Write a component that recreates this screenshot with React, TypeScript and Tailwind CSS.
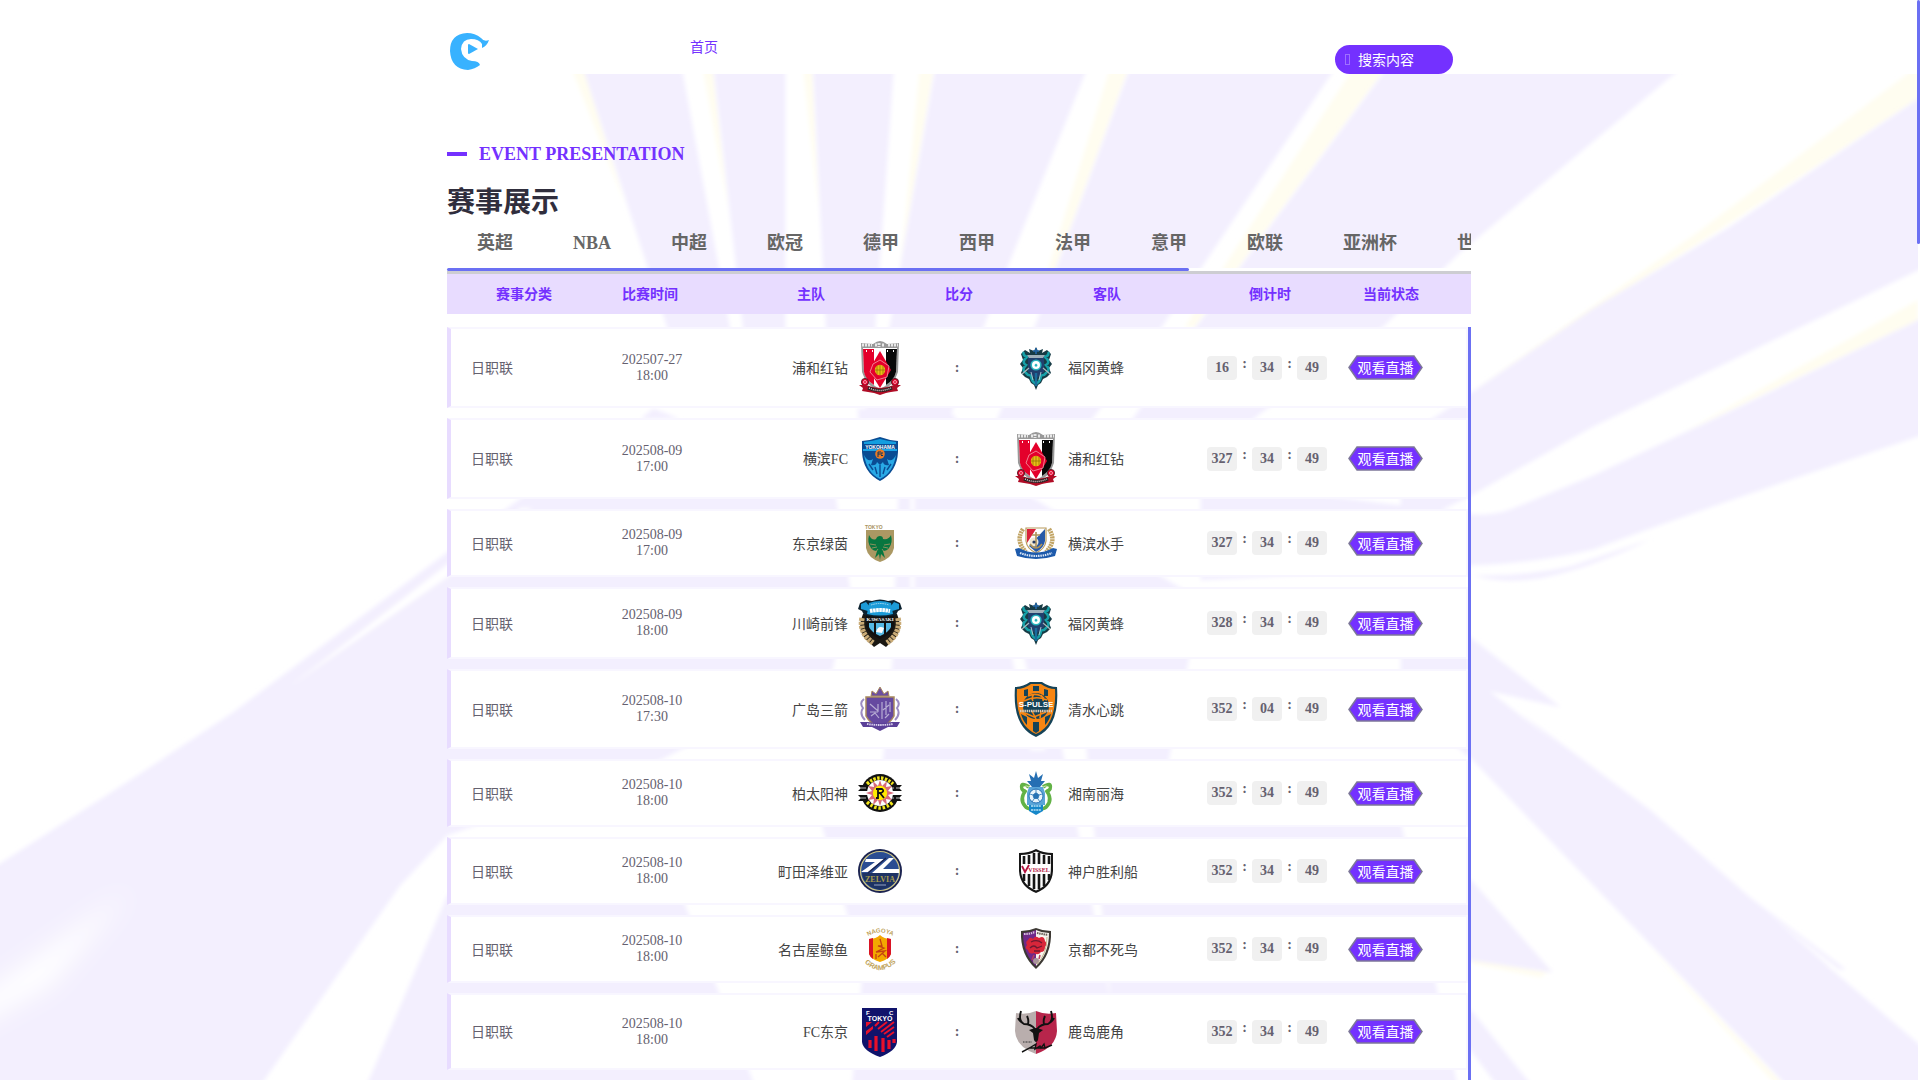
import React, { useState } from 'react';

interface Match {
  date: string;
  time: string;
  home: string;
  away: string;
  homeCrest: () => React.ReactElement;
  awayCrest: () => React.ReactElement;
  countdown: string[];
}

const Reds = () => (
  <svg viewBox="0 0 44 57" className="w-11 shrink-0">
    <path d="M3 4 L15 5 Q19 2 22 2 Q25 2 29 5 L41 4 L40 33 Q36 47 22 53 Q8 47 4 33 Z" fill="#999" />
    <path d="M5 9 H39 L38 33 Q34 44 22 50 Q10 44 6 33 Z" fill="#fff" />
    <path d="M5 10 H16 V46 Q7 40 6 33 Z" fill="#e4002b" />
    <path d="M28 10 H39 L38 33 Q36 41 28 46 Z" fill="#080808" />
    <path d="M4 6 H14 M17 6 H19 M21 4 V8 M24 6 H26 M30 6 H40" stroke="#e8e8e8" strokeWidth="3" strokeDasharray="2 1" />
    <path d="M8 12 h1 M14 12 h1 M29 12 h1 M35 12 h1" stroke="#fff" strokeWidth="2" />
    <path d="M22 12 L33 31 L22 49 L11 31 Z" fill="#e4002b" />
    <path d="M22 21 L31 27 L29 38 L19 41 L12 33 L15 25 Z" fill="none" stroke="#f4a0ac" strokeWidth="0.8" />
    <circle cx="22" cy="31" r="5.2" fill="#e9bd16" />
    <path d="M17 31 H27 M22 26 V36 M19 27 V35 M25 27 V35" stroke="#8c6a00" strokeWidth="0.7" />
    <circle cx="7" cy="43" r="3.6" fill="#e4002b" stroke="#40141c" strokeWidth="0.8" />
    <circle cx="37" cy="43" r="3.6" fill="#e4002b" stroke="#40141c" strokeWidth="0.8" />
    <circle cx="7" cy="43" r="1.5" fill="none" stroke="#fff" strokeWidth="0.6" />
    <circle cx="37" cy="43" r="1.5" fill="none" stroke="#fff" strokeWidth="0.6" />
    <path d="M1 46 L8 46 Q22 52 36 46 L43 46 L39 49 L40 52 Q32 53 28 54 L22 56 L16 54 Q10 53 4 52 L5 49 Z" fill="#b00d26" />
    <path d="M10 49 Q22 54 34 49" fill="none" stroke="#222" strokeWidth="3" />
    <path d="M11 49 Q22 54 33 49" fill="none" stroke="#f0c8ce" strokeWidth="1.5" strokeDasharray="1 1" />
  </svg>
);

const Avispa = () => (
  <svg viewBox="0 0 44 44" className="w-11 shrink-0">
    <path d="M22 1 L24 5 L29 3 L28 7 L33 4 L37 8 L35 14 L38 18 L35 22 L37 27 L33 31 L29 33 L27 37 L24 39 L22 44 L20 39 L17 37 L15 33 L11 31 L7 27 L9 22 L6 18 L9 14 L7 8 L11 4 L16 7 L15 3 L20 5 Z" fill="#173b45" />
    <path d="M10 6 Q8 9 13 11 Q7 16 12 19 Q7 24 12 27 Q14 30 17 29 Q17 35 22 38 Q27 35 27 29 Q30 30 32 27 Q37 24 32 19 Q37 16 31 11 Q36 9 34 6" fill="none" stroke="#16a0a8" strokeWidth="2.6" />
    <path d="M14 9 H30 V26 L22 33 L14 26 Z" fill="#20406e" />
    <path d="M13 9 H31 L29 12 H15 Z" fill="#9fb0ba" />
    <path d="M15 22 L8 28 M29 22 L36 28" stroke="#a9b8be" strokeWidth="1.2" />
    <circle cx="22" cy="19" r="5.6" fill="#26b3be" />
    <circle cx="22" cy="19" r="4" fill="#fff" />
    <path d="M22 17.5 L23.5 19 L23 20.5 H21 L20.5 19 Z" fill="#26b3be" />
    <path d="M22 2 V8 M19 5 H25" stroke="#2367a8" strokeWidth="1.6" />
    <path d="M22 27 V40" stroke="#1a6d9c" strokeWidth="2.4" />
    <path d="M17 26 L19 34 M27 26 L25 34" stroke="#cfe0e4" strokeWidth="0.8" />
  </svg>
);

const YokohamaFc = () => (
  <svg viewBox="0 0 44 44" className="w-11 shrink-0">
    <path d="M4 4 Q14 3 22 0 Q30 3 40 4 V15 Q39 35 22 44 Q5 35 4 15 Z" fill="#0a4c93" />
    <path d="M6 5 Q15 4 22 2 Q29 4 38 5 V7 H6 Z" fill="#139ee0" />
    <rect x="5" y="12" width="34" height="2" fill="#19a5e8" />
    <text x="22" y="11.5" textAnchor="middle" className="fill-white font-['Liberation_Sans',sans-serif] text-[5px] font-bold">YOKOHAMA</text>
    <path d="M6 18 Q9 36 22 42 Q35 36 38 18 Q34 26 29 22 L31 28 Q26 29 25 25 L22 28 L19 25 Q18 29 13 28 L15 22 Q10 26 6 18 Z" fill="#29a9e6" />
    <path d="M22 28 V40 M17 30 L19 37 M27 30 L25 37 M11 27 L15 33 M33 27 L29 33" stroke="#0a4c93" strokeWidth="1.4" />
    <circle cx="22" cy="17" r="4.8" fill="#e87a24" />
    <path d="M20 20 V15 H23 M20 17 H22 M25 16 Q22 15 23 18 Q24 20 25 18" fill="none" stroke="#0b3560" />
  </svg>
);

const Verdy = () => (
  <svg viewBox="0 0 44 44" className="w-11 shrink-0">
    <text x="7" y="8" className="fill-[#a8925c] font-['Liberation_Sans',sans-serif] text-[5px] font-bold">TOKYO</text>
    <path d="M8 9 H36 V27 Q34 37 22 41 Q10 37 8 27 Z" fill="#ab9863" />
    <path d="M22 15 Q25 15 25 18 Q31 19 33 14 Q35 22 31 27 Q29 30 25 30 L27 37 L23 33 L22 39 L21 33 L17 37 L19 30 Q15 30 13 27 Q9 22 11 14 Q14 20 18 18 Q19 15 22 15 Z" fill="#087640" />
    <path d="M12 23 L18 24 M14 27 L19 26 M32 23 L26 24 M30 27 L25 26 M17 32 L20 28 M27 32 L24 28" stroke="#ab9863" strokeWidth="0.8" />
  </svg>
);

const Marinos = () => (
  <svg viewBox="0 0 44 44" className="w-11 shrink-0">
    <path d="M9 8 Q1 20 12 31 M35 8 Q43 20 32 31" fill="none" stroke="#c2a566" strokeWidth="4.5" strokeDasharray="2 0.7" />
    <path d="M12 7 H32 V20 Q31 28 22 32 Q13 28 12 20 Z" fill="#fff" stroke="#b89a5c" strokeWidth="1.2" />
    <path d="M13 8 H22 L13 22 Z" fill="#d9213a" />
    <path d="M31 8 V20 Q30 27 22 31 L15 25 Z" fill="#2759a7" />
    <circle cx="20" cy="21" r="4.5" fill="#efe7d3" />
    <path d="M22 11 V27 M18 14 H26 M16 23 Q22 31 28 23" fill="none" stroke="#ad9259" strokeWidth="1.6" />
    <circle cx="20" cy="21" r="1.6" fill="#26395f" />
    <path d="M1 28 L5 27 Q22 36 39 27 L43 28 L41 35 Q22 41 3 35 Z" fill="#1d5aab" />
    <path d="M6 32 Q22 38 38 32" fill="none" stroke="#dbe7f7" strokeWidth="2.2" strokeDasharray="1.5 0.8" />
  </svg>
);

const Frontale = () => (
  <svg viewBox="0 0 44 48" className="w-11 shrink-0">
    <path d="M5 15 Q-3 33 12 44 L16 48 L22 44 L28 48 L32 44 Q47 33 39 15 Z" fill="#1a1712" />
    <path d="M4 19 Q1 34 15 44 M40 19 Q43 34 29 44" fill="none" stroke="#c9ab77" strokeWidth="5.5" strokeDasharray="3 0.8" />
    <path d="M8 14 H36 V27 Q34 35 22 40 Q10 35 8 27 Z" fill="#111" />
    <path d="M11 24 H33 V28 Q31 33 22 37 Q13 33 11 28 Z" fill="#55b9e5" />
    <path d="M17 24 V35 M27 24 V35" stroke="#111" strokeWidth="2" />
    <path d="M18 33 Q20 26 26 29 L24 34 Z" fill="#fff" />
    <path d="M2 4 L8 1 L14 2 Q22 -1 30 2 L36 1 L42 4 L44 10 L40 12 L38 16 Q22 20 6 16 L4 12 L0 10 Z" fill="#0d2230" />
    <path d="M3 5 L8 3 L12 8 L10 12 L3 10 Z M41 5 L36 3 L32 8 L34 12 L41 10 Z" fill="#1c9bd8" />
    <path d="M11 4 Q22 0 33 4 L35 15 Q22 18 9 15 Z" fill="#1c9bd8" />
    <path d="M13 6 Q22 3 31 6" fill="none" stroke="#a7dcf3" strokeDasharray="1.5 0.8" />
    <path d="M12 12 Q22 10 32 12" fill="none" stroke="#fff" strokeWidth="4" strokeDasharray="2.6 0.5" />
    <text x="22" y="22" textAnchor="middle" className="fill-white font-['Liberation_Serif',serif] text-[5px] font-bold">KAWASAKI</text>
  </svg>
);

const Sanfrecce = () => (
  <svg viewBox="0 0 44 44" className="w-11 shrink-0">
    <path d="M13 9 L14 4 L18 7 L22 0 L26 7 L30 4 L31 9 Z" fill="#6b4ea0" stroke="#a8895e" />
    <path d="M8 10 H36 V29 Q32 37 22 40 Q12 37 8 29 Z" fill="#6549a0" stroke="#a8895e" strokeWidth="1.5" />
    <path d="M6 12 Q1 16 5 21 Q1 27 7 33 M38 12 Q43 16 39 21 Q43 27 37 33" fill="none" stroke="#9c8cc4" strokeWidth="2" />
    <path d="M12 17 L20 24 V17 M13 29 L17 26 L21 31 M24 15 V32 M28 14 V28 M32 15 V25 M31 18 L25 23 M12 25 H20 M31 27 L27 31" stroke="#b8add4" strokeWidth="1.2" fill="none" />
    <path d="M2 35 H10 Q22 37 34 35 H42 L39 40 H30 L22 44 L14 40 H5 Z" fill="#5b4098" />
    <path d="M9 37 Q22 39 35 37" stroke="#d9d0ed" strokeWidth="1.8" strokeDasharray="1.5 0.7" fill="none" />
  </svg>
);

const SPulse = () => (
  <svg viewBox="0 0 44 56" className="w-11 shrink-0">
    <path d="M1 6 Q9 6 16 1 H28 Q35 6 43 6 Q46 46 22 56 Q-2 46 1 6 Z" fill="#154358" />
    <path d="M3 8 Q10 8 17 3 H27 Q34 8 41 8 Q43 44 22 53 Q1 44 3 8 Z" fill="#f68512" />
    <path d="M19 5 H25 V10 H19 Z M10 9 L14 8 V15 H10 Z M30 8 L34 9 V15 H30 Z M7 33 L13 36 V44 Q9 40 7 33 Z M37 33 L31 36 V44 Q35 40 37 33 Z M19 41 H25 V50 L22 52 L19 50 Z" fill="#154358" />
    <circle cx="22" cy="25" r="13" fill="#154358" />
    <path d="M14 15 Q23 11 30 17 M10 20 Q22 14 33 19 M11 32 L20 36 L32 31 M20 13 Q17 17 19 20 M27 14 Q30 17 29 20 M18 30 L22 38 M27 30 L26 37" stroke="#f68512" strokeWidth="1.6" fill="none" />
    <text x="22" y="26" textAnchor="middle" className="fill-white font-['Liberation_Sans',sans-serif] text-[8px] font-bold">S-PULSE</text>
    <path d="M6 30 H38" stroke="#d5c9b9" strokeWidth="2.5" strokeDasharray="1.5 0.7" />
  </svg>
);

const Reysol = () => (
  <svg viewBox="0 0 44 44" className="w-11 shrink-0">
    <circle cx="22" cy="22" r="19" fill="#111" />
    <path d="M0 14 H44 L41 17 L44 20 H0 L3 17 Z M0 24 H44 L41 27 L44 30 H0 L3 27 Z" fill="#111" />
    <path d="M3 17 H41 M3 27 H41" stroke="#bbb" strokeWidth="1.2" strokeDasharray="5 2" />
    <path d="M1 20 H43 V24 H1 Z" fill="#fff" />
    <circle cx="22" cy="22" r="13" fill="#fff" />
    <path d="M22 9 L24 15 L29 10 L28 16 L34 15 L30 20 L36 22 L30 24 L34 29 L28 28 L29 34 L24 29 L22 35 L20 29 L15 34 L16 28 L10 29 L14 24 L8 22 L14 20 L10 15 L16 16 L15 10 L20 15 Z" fill="#d86a7a" />
    <circle cx="22" cy="22" r="7.2" fill="#ffea00" />
    <path d="M9 13 Q22 1 35 13" fill="none" stroke="#f2e51b" strokeWidth="3.5" strokeDasharray="2.5 1.4" />
    <path d="M9 31 Q22 43 35 31" fill="none" stroke="#f2e51b" strokeWidth="3.5" strokeDasharray="2.5 1.8" />
    <path d="M18 18 H24 Q27 20 23 22 H20 M20 18 V27 H18 M22 22 L26 27" fill="none" stroke="#111" strokeWidth="1.8" />
  </svg>
);

const Bellmare = () => (
  <svg viewBox="0 0 44 44" className="w-11 shrink-0">
    <path d="M22 0 L24 7 L29 3 L27 10 L31 10 L26 16 H18 L13 10 L17 10 L15 3 L20 7 Z" fill="#256fb3" />
    <path d="M15 16 Q6 10 8 18 Q10 21 12 19 Q5 28 11 35 Q13 38 18 38" fill="none" stroke="#62b246" strokeWidth="3.6" />
    <path d="M29 16 Q38 10 36 18 Q34 21 32 19 Q39 28 33 35 Q31 38 26 38" fill="none" stroke="#62b246" strokeWidth="3.6" />
    <path d="M9 17 Q12 13 16 17 M35 17 Q32 13 28 17" fill="none" stroke="#d5e9b7" />
    <path d="M15 16 H29 L31 22 V34 H13 V22 Z" fill="#5aa5d8" />
    <circle cx="22" cy="25" r="7" fill="#e8f4fb" stroke="#2672b4" />
    <path d="M22 21.5 L25 24 L24 27.5 H20 L19 24 Z M22 18 V21 M28 23 L25 24 M26 31 L24 28 M18 31 L20 28 M16 23 L19 24" fill="#2672b4" stroke="#2672b4" strokeWidth="0.8" />
    <path d="M15 34 H29 V40 L22 44 L15 40 Z" fill="#1687c9" />
    <path d="M17 35 H27 M17 39 H27" stroke="#b9e1f3" strokeWidth="1.3" strokeDasharray="2 0.6" />
  </svg>
);

const Zelvia = () => (
  <svg viewBox="0 0 44 44" className="w-11 shrink-0">
    <circle cx="22" cy="22" r="22" fill="#1b2350" />
    <circle cx="22" cy="22" r="19.5" fill="#2b4d92" stroke="#cfc787" strokeWidth="1.2" />
    <path d="M4 24 H40 Q39 38 22 41 Q6 38 4 24 Z" fill="#1d3263" />
    <path d="M8 10 H26 L10 23 H3 L17 13 H7 Z" fill="#fff" />
    <path d="M31 9 H36 L25 20 H41 V24 H14 Z" fill="#fff" />
    <path d="M28 9 L10 24" stroke="#1b2350" strokeWidth="1.5" />
    <text x="22" y="33" textAnchor="middle" className="fill-[#a79d4e] font-['Liberation_Serif',serif] text-[8px] font-bold">ZELVIA</text>
    <path d="M16 36 H28" stroke="#93a2c4" />
  </svg>
);

const Vissel = () => (
  <svg viewBox="0 0 44 44" className="w-11 shrink-0">
    <path d="M5 4 Q15 4 22 0 Q29 4 39 4 V22 Q38 38 22 44 Q6 38 5 22 Z" fill="#161616" />
    <path d="M7 6 Q15 6 22 2.5 Q29 6 37 6 V22 Q36 36 22 41.5 Q8 36 7 22 Z" fill="#fff" />
    <path d="M10 7 V32 M15 6 V37 M20 4 V40 M25 4 V40 M30 6 V37 M35 7 V31" stroke="#161616" strokeWidth="2.6" />
    <path d="M7 15 H37 L36 25 H8 Z" fill="#fff" />
    <path d="M8 17 L11 23 L15 16" fill="none" stroke="#b3123f" strokeWidth="1.8" />
    <text x="25" y="23" textAnchor="middle" className="fill-[#b3123f] font-['Liberation_Serif',serif] text-[6px] font-bold">VISSEL</text>
  </svg>
);

const Grampus = () => (
  <svg viewBox="0 0 44 44" className="w-11 shrink-0">
    <defs>
      <path id="nagoya" d="M10 9 Q22 2 35 9" />
      <path id="grampus" d="M3 32 Q22 54 41 32" />
    </defs>
    <text className="fill-[#bea25a] font-['Liberation_Sans',sans-serif] text-[6px] font-bold">
      <textPath href="#nagoya">NAGOYA</textPath>
    </text>
    <path d="M11 12 Q18 12 22 8 Q26 12 33 12 V27 Q31 32 22 35 Q13 32 11 27 Z" fill="#f3a900" />
    <path d="M11 12 L15 11 V32 Q12 30 11 27 Z M33 12 L29 11 V32 Q32 30 33 27 Z" fill="#d91424" />
    <path d="M22 12 L24 19 H20 L26 21 L18 25 L27 24 L20 30 M24 26 L28 30 M18 27 V32" fill="none" stroke="#c44111" strokeWidth="1.3" />
    <text className="fill-[#bea25a] font-['Liberation_Sans',sans-serif] text-[7px] font-bold">
      <textPath href="#grampus" startOffset="5">GRAMPUS</textPath>
    </text>
  </svg>
);

const Kyoto = () => (
  <svg viewBox="0 0 44 44" className="w-11 shrink-0">
    <path d="M7 4 Q15 4 22 1 Q29 4 37 4 Q38 28 22 42 Q6 28 7 4 Z" fill="#3d3934" />
    <path d="M9 6 Q16 6 22 3 V39 Q9 27 9 6 Z" fill="#70298a" />
    <path d="M22 3 Q28 6 35 6 Q35 27 22 39 Z" fill="#f7f5ef" />
    <path d="M10 7 Q16 7 21 5" stroke="#d6bfe0" strokeWidth="2" strokeDasharray="1.5 0.7" />
    <path d="M23 6 L34 8" stroke="#6a6159" strokeWidth="2" strokeDasharray="1.5 0.7" />
    <path d="M14 13 Q16 9 19 12 Q21 8 25 11 Q30 8 31 14 Q34 17 31 20 Q31 25 27 25 Q24 29 20 26 Q15 28 14 23 Q10 21 13 18 Q11 15 14 13 Z" fill="#d8263a" />
    <path d="M17 15 Q23 12 28 16 M16 21 Q20 17 23 21 L28 19 M20 24 L26 24" fill="none" stroke="#6d1931" strokeWidth="1.3" />
    <path d="M20 28 L18 33 M26 28 L25 32" stroke="#b93f5c" strokeWidth="1.5" />
    <circle cx="22" cy="34" r="3" fill="#a8949b" />
    <path d="M33 10 Q33 27 23 37" stroke="#c5b78c" fill="none" />
  </svg>
);

const FcTokyo = () => (
  <svg viewBox="0 0 44 53" className="w-11 shrink-0">
    <path d="M4 3 H39 V37 Q38 46 22 52 Q5 46 4 37 Z" fill="#10136b" />
    <text x="8" y="9.5" className="fill-white font-['Liberation_Sans',sans-serif] text-[6px] font-bold">F</text>
    <text x="31" y="9.5" className="fill-white font-['Liberation_Sans',sans-serif] text-[6px] font-bold">C</text>
    <text x="22" y="15.5" textAnchor="middle" className="fill-white font-['Liberation_Sans',sans-serif] text-[7px] font-bold">TOKYO</text>
    <path d="M8 17 H14 L8 22 Z M8 26 L15 21 V24 L8 30 Z" fill="#e8102a" />
    <path d="M17 21 L21 17 M20 24 L29 17 M23 27 L36 17 M26 29 L36 22 M29 32 L36 27" stroke="#e8102a" strokeWidth="1.9" />
    <path d="M12 35 V43 M18 31 V46 M25 33 V47 M31 35 V44 M36 34 V38" stroke="#e8102a" strokeWidth="3.2" />
  </svg>
);

const Antlers = () => (
  <svg viewBox="0 0 44 44" className="w-11 shrink-0">
    <path d="M2 3 Q13 5 22 1 V44 Q2 37 1 21 Z" fill="#b9aead" />
    <path d="M22 1 Q31 5 42 3 L43 21 Q42 37 22 44 Z" fill="#b7254b" />
    <path d="M21 19 Q17 14 10 14 Q4 11 7 1 M14 14 Q15 10 13 6 M9 13 Q5 11 4 8 M23 19 Q27 14 34 14 Q40 11 37 1 M30 14 Q29 10 31 6 M35 13 Q39 11 40 8" fill="none" stroke="#111" strokeWidth="1.9" />
    <path d="M18 19 Q22 17 26 19 L29 20 L25 23 L24 30 Q22 34 20 30 L19 23 L15 20 Z" fill="#111" />
    <path d="M9 32 H18" stroke="#333" strokeDasharray="1 0.5" />
    <path d="M8 42 Q16 38 22 34 L21 39 L26 36 L27 38 L30 34 L31 38 L38 35 M15 38 H31" fill="none" stroke="#111" strokeWidth="1.4" />
  </svg>
);

const matches: Match[] = [
  { date: '202507-27', time: '18:00', home: '浦和红钻', away: '福冈黄蜂', homeCrest: Reds, awayCrest: Avispa, countdown: ['16', '34', '49'] },
  { date: '202508-09', time: '17:00', home: '横滨FC', away: '浦和红钻', homeCrest: YokohamaFc, awayCrest: Reds, countdown: ['327', '34', '49'] },
  { date: '202508-09', time: '17:00', home: '东京绿茵', away: '横滨水手', homeCrest: Verdy, awayCrest: Marinos, countdown: ['327', '34', '49'] },
  { date: '202508-09', time: '18:00', home: '川崎前锋', away: '福冈黄蜂', homeCrest: Frontale, awayCrest: Avispa, countdown: ['328', '34', '49'] },
  { date: '202508-10', time: '17:30', home: '广岛三箭', away: '清水心跳', homeCrest: Sanfrecce, awayCrest: SPulse, countdown: ['352', '04', '49'] },
  { date: '202508-10', time: '18:00', home: '柏太阳神', away: '湘南丽海', homeCrest: Reysol, awayCrest: Bellmare, countdown: ['352', '34', '49'] },
  { date: '202508-10', time: '18:00', home: '町田泽维亚', away: '神户胜利船', homeCrest: Zelvia, awayCrest: Vissel, countdown: ['352', '34', '49'] },
  { date: '202508-10', time: '18:00', home: '名古屋鲸鱼', away: '京都不死鸟', homeCrest: Grampus, awayCrest: Kyoto, countdown: ['352', '34', '49'] },
  { date: '202508-10', time: '18:00', home: 'FC东京', away: '鹿岛鹿角', homeCrest: FcTokyo, awayCrest: Antlers, countdown: ['352', '34', '49'] },
];

const leagues = ['英超', 'NBA', '中超', '欧冠', '德甲', '西甲', '法甲', '意甲', '欧联', '亚洲杯', '世界杯'];

const Rays = () => (
  <svg
    viewBox="0 74 1917 1006"
    preserveAspectRatio="xMidYMin slice"
    className="absolute inset-0 h-full w-full"
    aria-hidden="true"
  >
    <defs>
      <filter id="soft" x="-5%" y="-5%" width="110%" height="110%">
        <feGaussianBlur stdDeviation="2" />
      </filter>
      <filter id="softer" x="-20%" y="-20%" width="140%" height="140%">
        <feGaussianBlur stdDeviation="12" />
      </filter>
    </defs>
    <g fill="#fffdf0" filter="url(#soft)">
      <path d="M568 60 L584 60 L625 205 Z" />
      <path d="M701 60 H713 L728 210 Z" />
      <path d="M802 60 H813 L818 210 Z" />
      <path d="M920 60 H936 L900 270 Z" />
      <path d="M1112 60 H1132 L1045 300 L1038 300 Z" />
      <path d="M1358 60 H1392 L1195 327 L1184 327 Z" />
      <path d="M1917 66 V100 L1471 392 L1700 230 Z" />
      <path d="M1917 300 V322 L1680 434 Z" />
      <path d="M1471 955 L1548 970 L1540 977 L1471 963 Z" />
      <path d="M1640 938 L1795 1095 H1785 Z" />
    </g>
    <g fill="#f3effe" filter="url(#soft)">
      <path d="M580 60 H680 L732 340 H671 Z" />
      <path d="M712 60 H785 V340 H744 Z" />
      <path d="M812 60 H894 L874 340 H826 Z" />
      <path d="M936 60 H1090 L983 327 L951 413 L930 460 H850 L889 327 Z" />
      <path d="M1132 60 H1340 L1161 327 L1096 413 L1060 460 H980 L1034 327 Z" />
      <path d="M1392 60 H1690 L1460 252 L1382 327 L1260 413 L1180 480 H1090 L1195 327 Z" />
      <path d="M1930 90 L1827 160 L1727 228 L1593 308 L1471 392 L1400 440 V530 L1471 495 L1593 426 L1727 362 L1930 264 Z" />
      <path d="M1930 314 L1727 412 L1593 475 L1510 509 Q1490 516 1471 514 L1200 480 V580 L1471 565 Q1530 564 1593 549 Q1680 516 1930 432 Z" />
      <path d="M1473 575 Q1520 577 1570 566 L1650 539 Q1590 568 1540 578 Q1500 584 1473 575 Z" />
      <path d="M1400 590 L1471 638 L1560 707 L1489 691 L1590 770 L1832 970 L1930 1054 V1100 H1800 L1471 759 L1400 700 Z" />
      <path d="M1520 713 L1650 810 L1828 966 L1823 968 L1640 815 Z" />
      <path d="M1700 860 L1845 969 L1838 969 Z" />
      <path d="M1471 880 L1552 972 L1471 960 L1200 900 V780 Z" />
      <path d="M1471 1010 L1535 1090 H1500 L1440 1010 Z" />
      <path d="M640 419 L653 408 L680 419 Z" />
      <path d="M857 408 L951 413 L1000 470 L860 440 Z" />
      <path d="M447 552 L545 480 L835 495 L850 590 L832 670 L660 760 L447 835 L400 885 L250 1100 H-20 V876 L133 778 L233 712 Z" />
      <path d="M898 490 H1020 L1200 600 L1100 1100 H850 L892 660 Z" />
      <path d="M447 895 L660 840 L760 1100 H360 Z" />
      <path d="M820 820 H1400 L1460 1100 H900 Z" />
    </g>
    <g fill="#fff" filter="url(#soft)">
      <path d="M447 564 L500 530 L520 508 L532 508 L447 577 L290 686 Z" />
      <path d="M910 490 H914 V600 H910 Z" />
      <path d="M1010 650 L1022 650 L1045 750 H1030 Z M1060 740 H1085 L1110 1000 Z" />
    </g>
    <path d="M-40 1010 L130 890 L50 985 L-40 1035 Z" fill="#fff" filter="url(#softer)" />
  </svg>
);

const Countdown = ({ values }: { values: string[] }) => (
  <div className="flex w-[120px] items-start font-bold text-[#65616f]">
    {values.map((value, index) => (
      <React.Fragment key={index}>
        {index > 0 && <span className="w-[15px] text-center leading-4">:</span>}
        <span className="h-6 w-[30px] rounded bg-[#f0f0f0] text-center leading-6">{value}</span>
      </React.Fragment>
    ))}
  </div>
);

const LiveButton = () => (
  <button type="button" className="relative block h-[25px] w-[75px] text-white">
    <svg viewBox="0 0 75 25" className="absolute inset-0 h-full w-full" aria-hidden="true">
      <path d="M1 12.5 L9 1 H66 L74 12.5 L66 24 H9 Z" fill="#7431ff" stroke="#7d7799" strokeWidth="1.5" />
    </svg>
    <span className="relative block leading-[27px]">观看直播</span>
  </button>
);

const App = () => {
  const [league, setLeague] = useState('');

  return (
    <div className="relative flex h-screen flex-col overflow-hidden bg-white pr-[2px] font-['Liberation_Serif','Noto_Sans_CJK_SC',serif] text-sm">
      <div className="absolute top-0 right-0 z-10 h-[244px] w-[3px] rounded-full bg-[#6b70f3]" />
      <header className="h-[74px] shrink-0">
        <div className="mx-auto flex h-full w-full max-w-[1024px] items-start">
          <a href="#" aria-label="logo" className="mt-[33px] ml-[3px]">
            <svg viewBox="0 0 39 37" className="h-[37px] w-[39px]">
              <path d="M31 5 Q25 0 17 0 Q0 1 0 18 Q1 36 18 37 Q25 36 30 32 Q29 28 22 28 Q12 26 11 16 Q12 6 21 6 Q29 6 32 11 V15 Q37 13 39 7 Q34 9 31 5 Z" fill="#38b2ff" />
              <path d="M19 11 L28 16 L19 21 Q18 21 18 20 V12 Q18 11 19 11 Z" fill="#38b2ff" />
            </svg>
          </a>
          <nav className="mt-[37px] ml-[201px]">
            <a href="#" className="block leading-[22px] text-[#7431ff]">首页</a>
          </nav>
          <label className="mt-[45px] mr-[18px] ml-auto flex h-[29px] w-[118px] items-center gap-2 rounded-full bg-[#7431ff] pl-[10px]">
            <span className="h-[11px] w-[5px] border border-[#9f70ff]" />
            <input
              type="text"
              aria-label="搜索内容"
              placeholder="搜索内容"
              className="w-20 bg-transparent pt-[2px] text-white outline-none placeholder:text-white"
            />
          </label>
        </div>
      </header>

      <main className="relative flex-1">
        <Rays />
        <div className="relative mx-auto w-full max-w-[1024px] pt-[68px]">
          <div className="flex items-center gap-3 text-lg leading-6 font-bold text-[#7431ff]">
            <span className="h-1 w-5 bg-[#7431ff]" />
            EVENT PRESENTATION
          </div>
          <h2 className="mt-[17px] text-[28px] leading-10 font-bold text-[#302e3d]">赛事展示</h2>

          <div className="flex h-[45px] overflow-hidden text-lg font-bold text-[#666]">
            {leagues.map((name) => (
              <button
                key={name}
                type="button"
                aria-pressed={league === name}
                onClick={() => setLeague(name)}
                className="h-10 shrink-0 px-[30px] leading-10 font-bold"
              >
                {name}
              </button>
            ))}
          </div>
          <div className="h-[3px] bg-white">
            <div className="h-full w-[742px] rounded-full bg-[#6b70f3]" />
          </div>

          <table className="block">
            <thead className="block border-t-[3px] border-[#cdcdd2] bg-[#e8dcff] text-[#7431ff]">
              <tr className="grid h-10 grid-cols-[154fr_98fr_224fr_72fr_210fr_130fr_136fr] items-center pt-[2px]">
                <th scope="col">赛事分类</th>
                <th scope="col">比赛时间</th>
                <th scope="col">主队</th>
                <th scope="col">比分</th>
                <th scope="col" className="pl-[14px]">客队</th>
                <th scope="col">倒计时</th>
                <th scope="col" className="pr-6">当前状态</th>
              </tr>
            </thead>
            <tbody className="mt-[13px] flex flex-col gap-[10px] border-r-[3px] border-[#6b70f3] pb-[10px]">
              {matches.map((match, index) => (
                <tr
                  key={index}
                  className="grid grid-cols-[150fr_98fr_224fr_72fr_210fr_130fr_131fr] items-center border-2 border-l-4 border-[#f8f6ff] border-l-[#e8dcff] bg-white py-[10px] text-[#444]"
                >
                  <td className="pt-[3px] pl-5 text-[#65616f]">日职联</td>
                  <td className="pl-1 text-center leading-4 text-[#65616f]">
                    {match.date}
                    <br />
                    {match.time}
                  </td>
                  <td>
                    <div className="flex items-center justify-end gap-[10px] pr-[21px]">
                      <span className="pt-[3px]">{match.home}</span>
                      <match.homeCrest />
                    </div>
                  </td>
                  <td className="pr-1 text-center font-bold text-[#65616f]">:</td>
                  <td>
                    <div className="flex items-center gap-[10px] pl-[19px]">
                      <match.awayCrest />
                      <span className="pt-[3px]">{match.away}</span>
                    </div>
                  </td>
                  <td className="pl-[2px]">
                    <Countdown values={match.countdown} />
                  </td>
                  <td className="pl-[13px]">
                    <LiveButton />
                  </td>
                </tr>
              ))}
            </tbody>
          </table>
        </div>
      </main>
    </div>
  );
};

export default App;
